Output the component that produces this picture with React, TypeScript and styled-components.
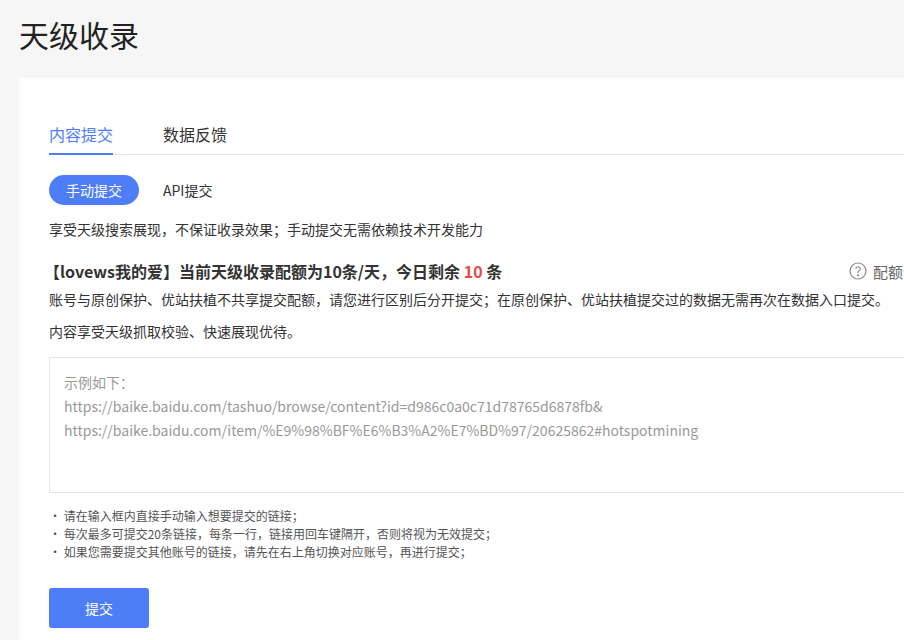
import React from 'react';
import styled, { createGlobalStyle } from 'styled-components';

const Global = createGlobalStyle`
  html, body { margin: 0; background: #f6f6f6; overflow: hidden; }
  body { font-family: "Microsoft YaHei", "Noto Sans CJK SC", sans-serif; color: #333; }
`;

const Page = styled.div`
  width: 980px;
  padding: 0 0 0 19px;
`;

const Header = styled.div`
  display: flex;
  justify-content: space-between;
  align-items: flex-start;
  height: 78px;
`;

const Title = styled.h1`
  margin: 14px 0 0;
  font-size: 30px;
  font-weight: 400;
  color: #222;
  line-height: 40px;
`;

const HeaderLink = styled.div`
  margin: 34px 0 0 0;
  width: 93px;
  display: flex;
  align-items: center;
  gap: 6px;
  font-size: 14px;
  color: #333;
  white-space: nowrap;
`;

const Card = styled.div`
  background: #fff;
  padding: 40px 30px 20px;
  min-height: 560px;
`;

const Tabs = styled.div`
  display: flex;
  gap: 50px;
  border-bottom: 1px solid #e6e6e6;
`;

const Tab = styled.div<{ $active?: boolean }>`
  font-size: 16px;
  line-height: 22px;
  padding: 5px 0 8px;
  color: ${p => (p.$active ? '#4e7ef7' : '#333')};
  border-bottom: 2px solid ${p => (p.$active ? '#4e7ef7' : 'transparent')};
  margin-bottom: -1px;
`;

const SubTabs = styled.div`
  display: flex;
  align-items: center;
  gap: 24px;
  margin-top: 20px;
`;

const Pill = styled.div<{ $active?: boolean }>`
  height: 30px;
  line-height: 30px;
  padding: 0 ${p => (p.$active ? '17px' : '0')};
  border-radius: 15px;
  font-size: 14px;
  background: ${p => (p.$active ? '#4e7ef7' : 'transparent')};
  color: ${p => (p.$active ? '#fff' : '#333')};
`;

const Desc = styled.p`
  margin: 14px 0 0;
  font-size: 14px;
  line-height: 20px;
`;

const QuotaRow = styled.div`
  display: flex;
  justify-content: space-between;
  align-items: center;
  margin-top: 20px;
  width: 884px;
`;

const QuotaTitle = styled.h2`
  margin: 0;
  font-size: 16px;
  font-weight: 700;
  line-height: 24px;
  margin-left: -5px;
`;

const Red = styled.span`
  color: #e84b4b;
`;

const Help = styled.div`
  display: flex;
  align-items: center;
  gap: 6px;
  font-size: 15px;
  color: #666;
  white-space: nowrap;
`;

const Note = styled.p`
  margin: 6px 0 0;
  font-size: 14px;
  line-height: 20px;
  white-space: nowrap;
`;

const Note2 = styled(Note)`
  margin-top: 12px;
`;

const InputBox = styled.div`
  margin-top: 16px;
  height: 110px;
  border: 1px solid #e6e6e6;
  padding: 12px 14px;
  font-size: 14px;
  line-height: 24px;
  color: #999;
`;

const Tips = styled.ul`
  list-style: none;
  margin: 14px 0 0;
  padding: 0;
  font-size: 12px;
  line-height: 18px;
  color: #555;
`;

const Button = styled.button`
  margin-top: 27px;
  width: 100px;
  height: 40px;
  border: none;
  border-radius: 3px;
  background: #4e7ef7;
  color: #fff;
  font-size: 14px;
  font-family: inherit;
`;

export default function App() {
  return (
    <Page>
      <Global />
      <Header>
        <Title>天级收录</Title>
        <HeaderLink>
          <svg width="14" height="16" viewBox="0 0 14 16" fill="none" stroke="#888" strokeWidth="1.2">
            <rect x="1" y="1" width="12" height="14" />
            <path d="M4 5h6M4 8h6M4 11h6" />
          </svg>
          天级收录说明
        </HeaderLink>
      </Header>
      <Card>
        <Tabs>
          <Tab $active>内容提交</Tab>
          <Tab>数据反馈</Tab>
        </Tabs>
        <SubTabs>
          <Pill $active>手动提交</Pill>
          <Pill>API提交</Pill>
        </SubTabs>
        <Desc>享受天级搜索展现，不保证收录效果；手动提交无需依赖技术开发能力</Desc>
        <QuotaRow>
          <QuotaTitle>【lovews我的爱】当前天级收录配额为10条/天，今日剩余 <Red>10</Red> 条</QuotaTitle>
          <Help>
            <svg width="18" height="18" viewBox="0 0 18 18" fill="none" stroke="#888" strokeWidth="1.2">
              <circle cx="9" cy="9" r="8" />
              <path d="M6.8 7a2.2 2.2 0 1 1 3 2c-.6.3-.8.7-.8 1.4v.6" />
              <circle cx="9" cy="13.3" r=".5" fill="#888" />
            </svg>
            配额说明
          </Help>
        </QuotaRow>
        <Note>账号与原创保护、优站扶植不共享提交配额，请您进行区别后分开提交；在原创保护、优站扶植提交过的数据无需再次在数据入口提交。</Note>
        <Note2>内容享受天级抓取校验、快速展现优待。</Note2>
        <InputBox>
          示例如下：<br />
          https://baike.baidu.com/tashuo/browse/content?id=d986c0a0c71d78765d6878fb&amp;<br />
          https://baike.baidu.com/item/%E9%98%BF%E6%B3%A2%E7%BD%97/20625862#hotspotmining
        </InputBox>
        <Tips>
          <li>· 请在输入框内直接手动输入想要提交的链接；</li>
          <li>· 每次最多可提交20条链接，每条一行，链接用回车键隔开，否则将视为无效提交；</li>
          <li>· 如果您需要提交其他账号的链接，请先在右上角切换对应账号，再进行提交；</li>
        </Tips>
        <Button>提交</Button>
      </Card>
    </Page>
  );
}
